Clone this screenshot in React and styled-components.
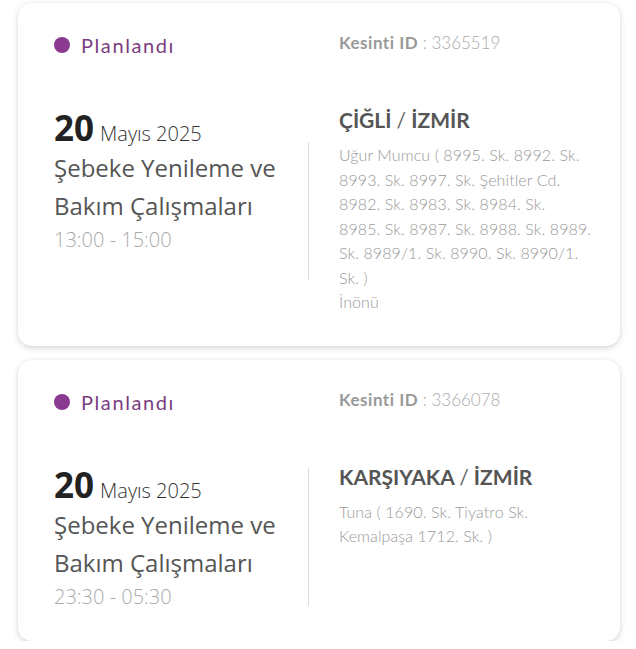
import React from "react";
import styled, { createGlobalStyle } from "styled-components";

const Global = createGlobalStyle`
  html, body { margin: 0; padding: 0; background: #ffffff; }
  * { box-sizing: border-box; }
`;

const Page = styled.div`
  display: flex;
  flex-direction: column;
  gap: 14px;
  padding: 3px 16px 0 18px;
`;

const Card = styled.div`
  display: grid;
  grid-template-columns: 254px 1px 1fr;
  grid-template-rows: auto auto;
  row-gap: 44px;
  background: #fff;
  border-radius: 14px;
  box-shadow: 0 2px 6px rgba(0, 0, 0, 0.16), 0 0 2px rgba(0, 0, 0, 0.06);
  padding: 23px 20px 31px 36px;
`;

const Status = styled.div`
  grid-column: 1;
  display: flex;
  align-items: center;
  gap: 11px;
  height: 38px;
  font-family: "Lato", "Noto Sans", sans-serif;
  font-size: 20px;
  letter-spacing: 1.6px;
  color: #7a3d80;
`;

const Dot = styled.span`
  width: 16px;
  height: 16px;
  border-radius: 50%;
  background: #8b3a91;
  flex: none;
`;

const IdLine = styled.div`
  grid-column: 3;
  padding-left: 30px;
  font-family: "Lato", "Noto Sans", sans-serif;
  font-size: 17px;
  line-height: 34px;
  color: #aaaaaa;
  font-weight: 300;
`;

const IdLabel = styled.b`
  font-weight: 700;
  letter-spacing: 0.5px;
  color: #999999;
`;

const DateBlock = styled.div`
  grid-column: 1;
  font-family: "Open Sans", "Noto Sans", sans-serif;
`;

const DateLine = styled.div`
  line-height: 40px;
  color: #333;
`;

const Day = styled.span`
  font-size: 35px;
  font-weight: 700;
  color: #222;
`;

const Month = styled.span`
  font-size: 20px;
  font-weight: 300;
  margin-left: 6px;
`;

const Title = styled.div`
  margin-top: -6px;
  font-size: 24px;
  line-height: 38px;
  color: #555;
`;

const Time = styled.div`
  margin-top: 2px;
  font-size: 20px;
  line-height: 26px;
  font-weight: 300;
  color: #aaaaaa;
`;

const Divider = styled.div`
  grid-column: 2;
  align-self: center;
  width: 1px;
  height: 138px;
  background: #dcdcdc;
`;

const Location = styled.div`
  grid-column: 3;
  padding-left: 30px;
  font-family: "Lato", "Noto Sans", sans-serif;
`;

const Place = styled.div`
  margin-top: -2px;
  font-size: 21px;
  line-height: 28px;
  font-weight: 700;
  color: #555;
`;

const Slash = styled.span`
  font-weight: 400;
  color: #666;
`;

const Address = styled.div`
  margin-top: 9px;
  font-size: 16px;
  line-height: 24.5px;
  font-weight: 300;
  letter-spacing: 0.1px;
  color: #999999;
  white-space: nowrap;
`;

const Line = styled.div``;

const outages = [
  {
    id: "3365519",
    time: "13:00 - 15:00",
    district: "ÇİĞLİ",
    city: "İZMİR",
    address: [
      "Uğur Mumcu ( 8995. Sk. 8992. Sk.",
      "8993. Sk. 8997. Sk. Şehitler Cd.",
      "8982. Sk. 8983. Sk. 8984. Sk.",
      "8985. Sk. 8987. Sk. 8988. Sk. 8989.",
      "Sk. 8989/1. Sk. 8990. Sk. 8990/1.",
      "Sk. )",
      "İnönü",
    ],
  },
  {
    id: "3366078",
    time: "23:30 - 05:30",
    district: "KARŞIYAKA",
    city: "İZMİR",
    address: ["Tuna ( 1690. Sk. Tiyatro Sk.", "Kemalpaşa 1712. Sk. )"],
  },
];

export default function App() {
  return (
    <>
      <Global />
      <Page>
        {outages.map((o) => (
          <Card key={o.id}>
            <Status>
              <Dot />
              Planlandı
            </Status>
            <IdLine>
              <IdLabel>Kesinti ID</IdLabel> : {o.id}
            </IdLine>
            <DateBlock>
              <DateLine>
                <Day>20</Day>
                <Month>Mayıs 2025</Month>
              </DateLine>
              <Title>Şebeke Yenileme ve Bakım Çalışmaları</Title>
              <Time>{o.time}</Time>
            </DateBlock>
            <Divider />
            <Location>
              <Place>
                {o.district} <Slash>/</Slash> {o.city}
              </Place>
              <Address>
                {o.address.map((a, i) => (
                  <Line key={i}>{a}</Line>
                ))}
              </Address>
            </Location>
          </Card>
        ))}
      </Page>
    </>
  );
}
